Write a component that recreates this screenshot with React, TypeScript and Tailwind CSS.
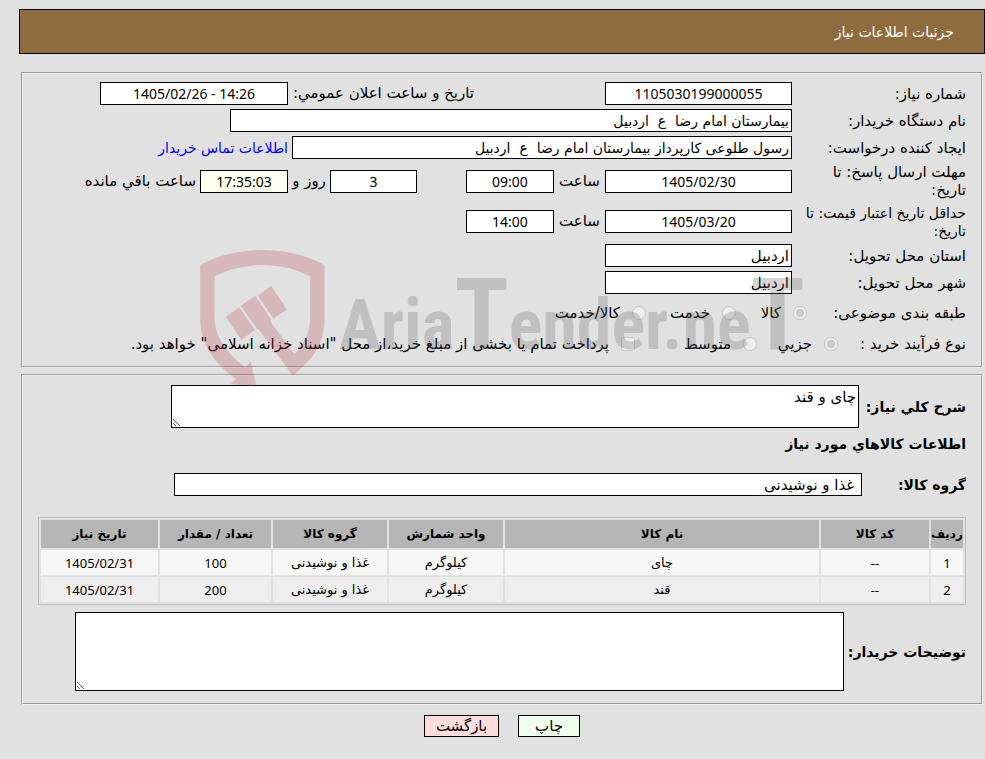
import type { ReactNode } from "react";

interface FieldProps {
  id: string;
  value: string;
  className: string;
  label?: string;
}

interface ChoiceProps {
  id: string;
  label: string;
  className?: string;
  type?: "radio" | "checkbox";
  name?: string;
  checked?: boolean;
}

const items = [
  { row: "1", code: "--", name: "چای", unit: "کیلوگرم", group: "غذا و نوشیدنی", count: "100", date: "1405/02/31" },
  { row: "2", code: "--", name: "قند", unit: "کیلوگرم", group: "غذا و نوشیدنی", count: "200", date: "1405/02/31" },
];

/** Centered field for numbers, dates and times */
function NumberField({ id, value, className, label }: FieldProps) {
  return (
    <input
      id={id}
      type="text"
      readOnly
      dir="ltr"
      aria-label={label}
      value={value}
      className={`h-[23px] shrink-0 border border-black text-center font-['Noto_Sans',sans-serif] text-sm ${className}`}
    />
  );
}

function TextField({ id, value, className, label }: FieldProps) {
  return (
    <input
      id={id}
      type="text"
      readOnly
      aria-label={label}
      value={value}
      className={`h-[23px] shrink-0 border border-black bg-white px-0.5 ${className}`}
    />
  );
}

function RowLabel({ htmlFor, className = "", children }: { htmlFor: string; className?: string; children: ReactNode }) {
  return (
    <label htmlFor={htmlFor} className={`w-[174px] shrink-0 pl-1 leading-[18px] ${className}`}>
      {children}
    </label>
  );
}

function Choice({ id, label, className = "", type = "radio", name, checked = false }: ChoiceProps) {
  return (
    <span className={`flex shrink-0 items-center gap-3 whitespace-nowrap ${className}`}>
      <input id={id} type={type} name={name} defaultChecked={checked} disabled className="size-3.5" />
      <label htmlFor={id}>{label}</label>
    </span>
  );
}

function Watermark() {
  return (
    <div dir="ltr" className="pointer-events-none absolute top-[250px] left-[200px] flex opacity-25">
      <svg viewBox="60 60 374 411" className="h-[137px] w-[125px] shrink-0" fill="#b94149" aria-hidden="true">
        <path d="M60 105Q145 60 247 60Q350 60 433 105V265C433 340 400 387 338 437L235 298L231 297L182 227L225 197L273 268L271 275L343 373C375 340 390 305 390 265V139Q325 105 247 105Q170 105 103 139V265C103 320 140 370 195 413L212 394L229 470L152 462L168 447C100 400 60 340 60 265Z" />
        <path d="M137 261L177 232L224 300L184 330Z" />
        <path d="M233 197L273 167L320 238L280 266Z" />
      </svg>
      <span className="pt-5 pl-3.5 font-['Roboto_Condensed','Liberation_Sans',sans-serif] text-[70px] leading-[90px] font-bold text-[#616161]">
        Aria<span className="text-[100px]">T</span>ender.ne<span className="text-[100px]">T</span>
      </span>
    </div>
  );
}

function App() {
  return (
    <div dir="rtl" className="relative min-h-screen bg-[#e1e1e1] pt-[9px] pb-5 font-['DejaVu_Sans',sans-serif] text-[15px] text-black">
      <header className="ml-[19px] flex h-[45px] items-center border border-black bg-[#8f6c3f] px-[30px] text-white">
        <h1 className="text-sm">جزئیات اطلاعات نیاز</h1>
      </header>

      <main className="mt-[18px] mr-0.5 ml-[21px]">
        {/* Need information */}
        <fieldset className="border-2 border-[#f0f0f0] px-[15px] pt-1.5 pb-2 [border-style:groove]">
          <div className="flex h-[27px] items-center">
            <RowLabel htmlFor="needNo">شماره نیاز:</RowLabel>
            <NumberField id="needNo" value="1105030199000055" className="w-[187px] bg-white" />
            <label htmlFor="announce" className="mr-[131px] w-[186px] shrink-0 whitespace-nowrap">
              تاریخ و ساعت اعلان عمومي:
            </label>
            <NumberField id="announce" value="1405/02/26 - 14:26" className="w-[188px] bg-white" />
          </div>

          <div className="flex h-[27px] items-center">
            <RowLabel htmlFor="buyer">نام دستگاه خریدار:</RowLabel>
            <TextField id="buyer" value="بیمارستان امام رضا  ع  اردبیل" className="w-[562px] text-sm" />
          </div>

          <div className="flex h-[27px] items-center">
            <RowLabel htmlFor="creator">ایجاد کننده درخواست:</RowLabel>
            <TextField id="creator" value="رسول طلوعی کارپرداز بیمارستان امام رضا  ع  اردبیل" className="w-[500px] text-sm" />
            <a href="#contact" className="mr-1 text-sm text-[#0000ff]">
              اطلاعات تماس خریدار
            </a>
          </div>

          <div className="flex h-10 items-center">
            <RowLabel htmlFor="deadline">مهلت ارسال پاسخ: تا تاریخ:</RowLabel>
            <NumberField id="deadline" value="1405/02/30" className="w-[187px] bg-white" />
            <label htmlFor="deadlineTime" className="w-[51px] shrink-0 text-center">
              ساعت
            </label>
            <NumberField id="deadlineTime" value="09:00" className="w-[88px] bg-white" />
            <NumberField id="daysLeft" label="روز" value="3" className="mr-[49px] w-[87px] bg-white" />
            <span className="w-[42px] shrink-0 text-center">روز و</span>
            <NumberField id="timeLeft" label="ساعت باقي مانده" value="17:35:03" className="w-[88px] bg-[#fffff0]" />
            <span className="mr-1 whitespace-nowrap">ساعت باقي مانده</span>
          </div>

          <div className="flex h-[41px] items-center">
            <RowLabel htmlFor="validity" className="text-sm">
              حداقل تاریخ اعتبار قیمت: تا تاریخ:
            </RowLabel>
            <NumberField id="validity" value="1405/03/20" className="w-[187px] bg-white" />
            <label htmlFor="validityTime" className="w-[51px] shrink-0 text-center">
              ساعت
            </label>
            <NumberField id="validityTime" value="14:00" className="w-[88px] bg-white" />
          </div>

          <div className="flex h-[27px] items-center">
            <RowLabel htmlFor="province">استان محل تحویل:</RowLabel>
            <TextField id="province" value="اردبیل" className="w-[187px] text-[15px]" />
          </div>

          <div className="flex h-[27px] items-center">
            <RowLabel htmlFor="city">شهر محل تحویل:</RowLabel>
            <TextField id="city" value="اردبیل" className="w-[187px] text-[15px]" />
          </div>

          <div className="flex h-[34px] items-center">
            <span className="w-[159px] shrink-0">طبقه بندی موضوعی:</span>
            <Choice id="goods" name="category" label="کالا" checked className="w-[71px]" />
            <Choice id="service" name="category" label="خدمت" className="w-[90px]" />
            <Choice id="both" name="category" label="کالا/خدمت" />
          </div>

          <div className="flex h-7 items-center">
            <span className="w-32 shrink-0">نوع فرآیند خرید :</span>
            <Choice id="small" name="process" label="جزیي" checked className="w-[81px]" />
            <Choice id="medium" name="process" label="متوسط" className="w-[122px]" />
            <Choice
              id="treasury"
              type="checkbox"
              label={'پرداخت تمام یا بخشی از مبلغ خرید،از محل "اسناد خزانه اسلامی" خواهد بود.'}
            />
          </div>
        </fieldset>

        {/* Requested goods */}
        <fieldset className="mt-1.5 border-2 border-[#f0f0f0] px-[15px] pt-[9px] pb-3 [border-style:groove]">
          <div className="flex items-center">
            <label htmlFor="description" className="w-[107px] shrink-0 text-sm font-bold whitespace-nowrap">
              شرح کلي نیاز:
            </label>
            <textarea
              id="description"
              readOnly
              defaultValue="چای و قند"
              className="h-[43px] w-[688px] resize border border-black bg-white px-0.5 text-[15px]"
            />
          </div>

          <h2 className="mt-1 text-sm leading-6 font-bold">اطلاعات کالاهاي مورد نیاز</h2>

          <div className="mt-[17px] flex items-center">
            <label htmlFor="goodsGroup" className="w-[104px] shrink-0 text-sm font-bold">
              گروه کالا:
            </label>
            <TextField id="goodsGroup" value=" غذا و نوشیدنی" className="w-[688px] text-[15px]" />
          </div>

          <table className="mt-[21px] w-full table-fixed border-separate border-spacing-0.5 border border-[#bdbdbd] text-center">
            <thead>
              <tr className="h-7 bg-[#b5b5b5] text-xs whitespace-nowrap">
                <th className="w-8">ردیف</th>
                <th className="w-[108px]">کد کالا</th>
                <th>نام کالا</th>
                <th className="w-[114px]">واحد شمارش</th>
                <th className="w-[114px]">گروه کالا</th>
                <th className="w-[111px]">تعداد / مقدار</th>
                <th className="w-[117px]">تاریخ نیاز</th>
              </tr>
            </thead>
            <tbody className="text-[13px]">
              {items.map((item) => (
                <tr key={item.row} className="h-[25px] leading-5 odd:bg-[#f7f7f7] even:bg-[#eeeeee]">
                  <td className="font-['Noto_Sans',sans-serif]">{item.row}</td>
                  <td className="font-['Noto_Sans',sans-serif]">{item.code}</td>
                  <td>{item.name}</td>
                  <td>{item.unit}</td>
                  <td>{item.group}</td>
                  <td className="font-['Noto_Sans',sans-serif]">{item.count}</td>
                  <td className="font-['Noto_Sans',sans-serif]">{item.date}</td>
                </tr>
              ))}
            </tbody>
          </table>

          <div className="mt-[7px] flex items-center">
            <label htmlFor="notes" className="w-[122px] shrink-0 text-sm font-bold whitespace-nowrap">
              توضیحات خریدار:
            </label>
            <textarea id="notes" readOnly className="h-[79px] w-[769px] resize border border-black bg-white" />
          </div>
        </fieldset>

        <div className="mt-2.5 flex justify-center gap-[19px]">
          <button type="button" className="h-[22px] w-[62px] border border-black bg-[#eeffee] leading-5">
            چاپ
          </button>
          <button type="button" className="h-[22px] w-[75px] border border-black bg-[#ffdddd] leading-5">
            بازگشت
          </button>
        </div>
      </main>

      <Watermark />
    </div>
  );
}

export default App;
